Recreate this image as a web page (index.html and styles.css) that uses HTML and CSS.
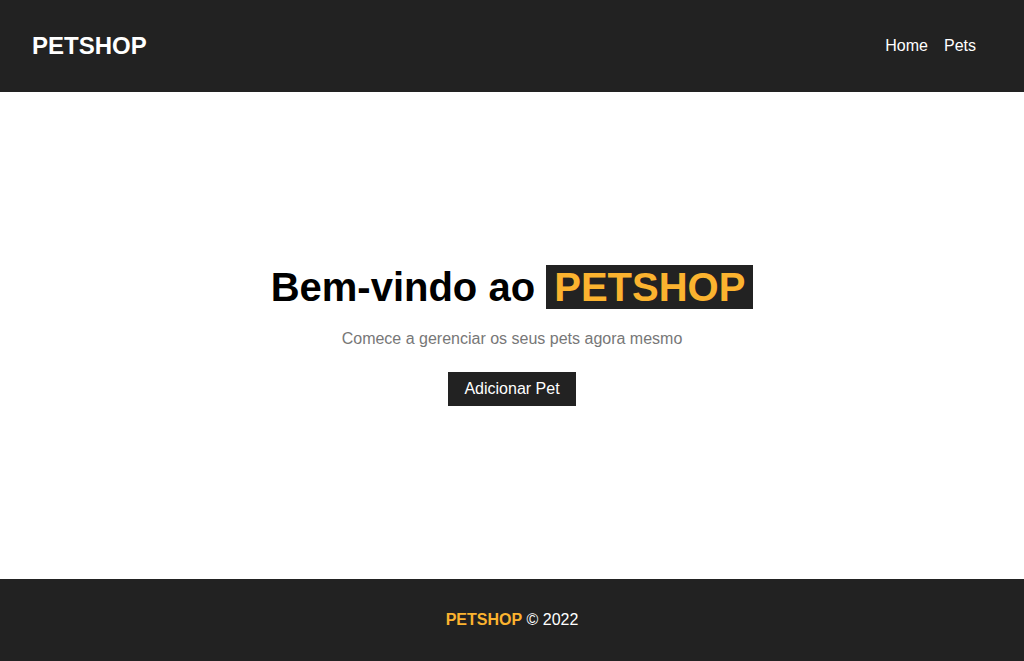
FILE: index.html
```html
<!DOCTYPE html>
<html lang="pt-BR">
<head>
<meta charset="utf-8">
<title>PETSHOP</title>
<link rel="stylesheet" href="styles.css">
</head>
<body>
<div class="page">
  <header class="header">
    <a class="logo" href="#">PETSHOP</a>
    <nav class="nav">
      <a href="#">Home</a>
      <a href="#">Pets</a>
    </nav>
  </header>
  <main class="hero">
    <h1 class="hero-title">Bem-vindo ao <span class="brand-box">PETSHOP</span></h1>
    <p class="hero-sub">Comece a gerenciar os seus pets agora mesmo</p>
    <button class="btn">Adicionar Pet</button>
  </main>
  <footer class="footer">
    <span class="footer-brand">PETSHOP</span>&nbsp;© 2022
  </footer>
</div>
</body>
</html>
```

FILE: styles.css
```css
* { box-sizing: border-box; }
html, body { margin: 0; padding: 0; }
body {
  font-family: "Liberation Sans", Arial, sans-serif;
  background: #fff;
  color: #000;
}
.page {
  display: flex;
  flex-direction: column;
  height: 661px;
}
.header {
  height: 92px;
  flex: none;
  background: #222;
  display: flex;
  align-items: center;
  justify-content: space-between;
  padding: 0 48px 0 32px;
}
.logo {
  color: #fff;
  text-decoration: none;
  font-weight: bold;
  font-size: 24px;
}
.nav {
  display: flex;
  gap: 16px;
}
.nav a {
  color: #fff;
  text-decoration: none;
  font-size: 16px;
}
.hero {
  flex: 1;
  display: flex;
  flex-direction: column;
  align-items: center;
  justify-content: center;
}
.hero-title {
  margin: 0;
  font-size: 40px;
  font-weight: bold;
  color: #000;
}
.brand-box {
  background: #222;
  color: #fbb32f;
  padding: 0 8px;
}
.hero-sub {
  margin: 20px 0 24px;
  font-size: 16px;
  color: #777;
}
.btn {
  font-family: inherit;
  font-size: 16px;
  color: #fff;
  background: #222;
  border: none;
  padding: 8px 16px;
  cursor: pointer;
}
.footer {
  height: 82px;
  flex: none;
  background: #222;
  color: #fff;
  font-size: 16px;
  display: flex;
  align-items: center;
  justify-content: center;
}
.footer-brand {
  color: #fbb32f;
  font-weight: bold;
}
```
